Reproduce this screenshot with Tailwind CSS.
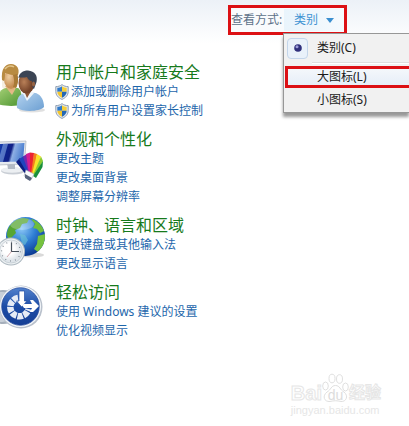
<!DOCTYPE html>
<html lang="zh-CN">
<head>
  <meta charset="UTF-8" />
  <meta name="viewport" content="width=device-width, initial-scale=1.0" />
  <title>控制面板</title>
  <script src="https://cdn.jsdelivr.net/npm/@tailwindcss/browser@4"></script>
</head>
<body class="flex min-h-screen flex-col bg-white font-['Noto_Sans','Noto_Sans_CJK_SC',sans-serif] text-xs text-[#1d66ab]">

  <!-- shield used in front of admin links -->
  <svg class="hidden" aria-hidden="true">
    <symbol id="shield" viewBox="0 0 14 16">
      <path d="M7 .6 C5.4 2 3 2.6 .8 2.6 V7.5 C.8 11.4 3.6 14 7 15.4 C10.4 14 13.2 11.4 13.2 7.5 V2.6 C11 2.6 8.6 2 7 .6Z" fill="#e4e8ee" stroke="#8395ab" stroke-width=".9" />
      <path d="M7 2.2 C5.6 3.2 4 3.7 2.3 3.8 V7.8 H7Z" fill="#2f79c9" />
      <path d="M7 2.2 C8.4 3.2 10 3.7 11.7 3.8 V7.8 H7Z" fill="#f6cf3a" />
      <path d="M2.3 7.8 H7 V13.8 C4.4 12.6 2.4 10.6 2.3 7.8Z" fill="#f3c52c" />
      <path d="M11.7 7.8 H7 V13.8 C9.6 12.6 11.6 10.6 11.7 7.8Z" fill="#2467b5" />
    </symbol>
  </svg>

  <header class="flex h-[62px] items-start justify-end bg-linear-to-b from-[#ecf1f7] to-white to-70% pt-[5px] pr-[62px]">
    <div class="relative flex h-[30px] w-[119px] items-center border-3 border-[#dc1014] bg-[#f9fbfd]">
      <label for="view-btn" class="w-[53px] whitespace-nowrap text-[#5d7188]">查看方式:</label>
      <button id="view-btn" type="button" aria-haspopup="menu" aria-expanded="true" class="flex h-[22px] flex-1 items-center gap-2 bg-linear-to-r from-[#e9f4fc] to-[#f6fafd] pl-[10px] text-[#3e93d3]">
        类别
        <svg viewBox="0 0 8 5" class="h-[5px] w-2" aria-hidden="true"><path d="M0 0 H8 L4 5Z" fill="#3a8fd0" /></svg>
      </button>

      <div role="menu" aria-labelledby="view-btn" class="absolute top-[25px] -right-[65px] left-[52px] z-10 border border-r-0 border-[#979797] bg-[#f1f1f1] text-[#1a1a1a] shadow-[0_4px_3px_rgba(0,0,0,0.4)]">
        <button type="button" role="menuitemradio" aria-checked="true" class="flex h-7 w-full items-center gap-[9px] pl-[3px]">
          <span class="grid size-[21px] place-items-center rounded-sm border border-[#c3d5ea] bg-[#e9f1fa]">
            <svg viewBox="0 0 8 8" class="size-2" aria-hidden="true">
              <circle cx="4" cy="4" r="3.8" fill="#30307c" />
              <circle cx="3" cy="2.8" r="1.5" fill="#9d9dda" />
            </svg>
          </span>
          <span>类别(C)</span>
        </button>
        <div class="ml-7 border-t border-[#dedede] bg-white pb-px"></div>
        <div class="pt-0.5 pl-px">
          <button type="button" role="menuitemradio" aria-checked="false" class="flex h-[22px] w-full items-center border-3 border-r-0 border-[#dc1014] bg-linear-to-b from-[#f4f7fb] to-[#e6eef8] pl-[29px]">大图标(L)</button>
        </div>
        <button type="button" role="menuitemradio" aria-checked="false" class="flex h-6 w-full items-center pl-[33px]">小图标(S)</button>
      </div>
    </div>
  </header>

  <main class="flex flex-col gap-[9px]">
    <section class="flex">
      <svg viewBox="0 0 48 56" class="h-14 w-12 shrink-0" aria-hidden="true">
        <defs>
          <linearGradient id="green" x1="0" y1="0" x2="1" y2="1"><stop offset="0" stop-color="#a6d177" /><stop offset="1" stop-color="#4c9430" /></linearGradient>
          <linearGradient id="blue" x1="0" y1="0" x2="1" y2="1"><stop offset="0" stop-color="#b4d3ef" /><stop offset="1" stop-color="#6c9fd2" /></linearGradient>
          <radialGradient id="face" cx=".35" cy=".4"><stop offset="0" stop-color="#f7d9b0" /><stop offset="1" stop-color="#c98f58" /></radialGradient>
          <radialGradient id="face2" cx=".35" cy=".45"><stop offset="0" stop-color="#b98058" /><stop offset="1" stop-color="#754329" /></radialGradient>
        </defs>
        <path d="M-3 42 C-3 32 0 27 6 26 L18 26 C21 28 22 32 22 42 C16 45 4 44 -3 42Z" fill="url(#green)" />
        <path d="M5 24 L12 33 L17 24Z" fill="#e5b987" />
        <ellipse cx="11" cy="17" rx="7" ry="10" fill="url(#face)" />
        <path d="M2 17 C2 7 5 2 11 2 C17 2 20 7 18 13 C13 14 9 12 6 10 C7 13 10 14 13 15 L14 28 C9 29 4 28 2 25Z" fill="#b99045" opacity=".15" />
        <path d="M2 18 C1 7 5 2 11 2 C17 2 20 7 18 13 C13 14 9 12 5 11 C5 15 5 16 4 19Z" fill="#b88b42" />
        <path d="M17 12 C19 16 18 23 16 26 L13 25 C15 21 14 17 13 13Z" fill="#a87a36" />
        <path d="M5 7 C7 4 11 3 14 5" fill="none" stroke="#e3c68c" stroke-width="1.5" />
        <ellipse cx="32" cy="48" rx="13" ry="2.500" fill="#000" opacity=".12" />
        <path d="M17 46 C16 37 19 32 25 31 L36 31 C41 33 44 38 44 45 C39 50 23 50 17 46Z" fill="url(#blue)" />
        <path d="M22 30 L27 39 L35 30Z" fill="#eef4fa" />
        <path d="M23 26 L27 36 L33 26Z" fill="#8d5636" />
        <ellipse cx="26.500" cy="21" rx="8" ry="10.500" fill="url(#face2)" />
        <path d="M18.500 16 C19 11 23 8.500 28 8.500 C35 9 38 14 36.500 20 L34 27 C32 26 32 22 32 19 C29 19 28 17 27 15 C24 16 20 15 18.500 16Z" fill="#3b4454" />
        <ellipse cx="33.500" cy="22" rx="1.500" ry="2.500" fill="#9a6443" />
      </svg>
      <div class="pl-2">
        <h2 class="text-base leading-5 text-[#177a1c]">用户帐户和家庭安全</h2>
        <ul class="leading-[19px]">
          <li><a href="#" class="flex items-center gap-0.5"><svg class="-ml-px h-4 w-[14px]" aria-hidden="true"><use href="#shield" /></svg>添加或删除用户帐户</a></li>
          <li><a href="#" class="flex items-center gap-0.5"><svg class="-ml-px h-4 w-[14px]" aria-hidden="true"><use href="#shield" /></svg>为所有用户设置家长控制</a></li>
        </ul>
      </div>
    </section>

    <section class="flex">
      <svg viewBox="0 0 48 56" class="h-14 w-12 shrink-0" aria-hidden="true">
        <defs>
          <linearGradient id="screen" x1="0" y1="0" x2="1" y2=".2"><stop offset="0" stop-color="#1c48b8" /><stop offset=".35" stop-color="#0c2390" /><stop offset=".55" stop-color="#122186" /><stop offset=".65" stop-color="#8eafe4" /><stop offset="1" stop-color="#4c7fd0" /></linearGradient>
        </defs>
        <ellipse cx="13" cy="42" rx="12" ry="3.500" fill="#c9ced5" />
        <ellipse cx="12" cy="41" rx="11" ry="2.800" fill="#eceff2" />
        <path d="M7 34 H15 V40 H8Z" fill="#b3bac4" />
        <path d="M-2 13 L26 12 L24.500 35 L-2 36Z" fill="#e5e9ee" stroke="#aab1bb" stroke-width=".7" />
        <path d="M-2 15 L24.500 14 L23 32.500 L-2 33Z" fill="url(#screen)" />
        <path d="M3 15 L8 15 L3 33 L-2 33Z" fill="#9bc1f4" opacity=".5" />
        <path d="M27 47 L16 33 L20 29 L30 45Z" fill="#0c1d80" />
        <path d="M28 46 L19 30 L24 27 L31 45Z" fill="#2044bd" />
        <path d="M29 45 L23 27.500 L27 25 L31 44Z" fill="#6f2bb0" />
        <path d="M29 45 L26 25 L30 23.500 L32 44Z" fill="#d41e92" />
        <path d="M30 45 L30 23.500 L34 24 L33 44Z" fill="#ec2433" />
        <path d="M31 45 L34 24 L37 25 L34 45Z" fill="#f4801c" />
        <path d="M32 45 L37 25 L41 27.500 L35 45Z" fill="#f8e22a" />
        <path d="M33 46 L41 27.500 L43 32 L35 47Z" fill="#8ccc2f" />
        <path d="M33 47 L43 32 L42.500 38 L36 49Z" fill="#188f3b" />
        <path d="M26 41 L34 45 L31 51 L24 47Z" fill="#f8f9fb" stroke="#a4abb6" stroke-width=".6" />
        <path d="M25 45 L32 49 L30 52 L25 49Z" fill="#56617b" />
      </svg>
      <div class="pl-2">
        <h2 class="text-base leading-5 text-[#177a1c]">外观和个性化</h2>
        <ul class="leading-[19px]">
          <li><a href="#">更改主题</a></li>
          <li><a href="#">更改桌面背景</a></li>
          <li><a href="#">调整屏幕分辨率</a></li>
        </ul>
      </div>
    </section>

    <section class="flex">
      <svg viewBox="0 0 48 56" class="h-14 w-12 shrink-0" aria-hidden="true">
        <defs>
          <radialGradient id="sea" cx=".4" cy=".3" r=".7"><stop offset="0" stop-color="#8cc8f6" /><stop offset=".5" stop-color="#2f7ed4" /><stop offset="1" stop-color="#0c3c94" /></radialGradient>
          <radialGradient id="dial" cx=".4" cy=".4"><stop offset=".5" stop-color="#fff" /><stop offset="1" stop-color="#dfe5ea" /></radialGradient>
          <clipPath id="globe"><circle cx="25.500" cy="21.500" r="19.500" /></clipPath>
        </defs>
        <ellipse cx="31" cy="40" rx="13" ry="2.500" fill="#000" opacity=".15" />
        <circle cx="25.500" cy="21.500" r="19.500" fill="url(#sea)" />
        <g clip-path="url(#globe)">
          <path d="M7 20 C7 11 14 4 23 3 L29 4 L27 8 L22 9 L20 13 L15 15 L16 18 L12 22 L9 26Z" fill="#57a634" />
          <path d="M31 4 C37 5 42 10 44 16 L40 18 L37 14 L33 13 L35 9Z" fill="#6fbd3d" />
          <path d="M38 21 L45 19 C46 26 43 33 38 37 L34 34 L37 29Z" fill="#76c23e" />
          <path d="M20 19 L25 20 L28 25 L25 30 L22 29Z" fill="#6fc4d5" opacity=".6" />
          <ellipse cx="22" cy="9" rx="12" ry="6" fill="#fff" opacity=".25" />
        </g>
        <circle cx="11" cy="36.500" r="14" fill="#aeb9c1" />
        <circle cx="11" cy="36.500" r="13" fill="#edf1f3" />
        <circle cx="11" cy="36.500" r="11.500" fill="url(#dial)" stroke="#bdc7ce" stroke-width=".7" />
        <circle cx="11" cy="36.500" r="9.500" fill="none" stroke="#6d7780" stroke-width="1.200" stroke-dasharray=".8 4.174" />
        <path d="M11.500 27.500 V36.500 H19" fill="none" stroke="#47525c" stroke-width="1.200" />
        <path d="M11.500 36.500 L7 42" stroke="#b8727a" stroke-width=".6" />
      </svg>
      <div class="pl-2">
        <h2 class="text-base leading-5 text-[#177a1c]">时钟、语言和区域</h2>
        <ul class="leading-[19px]">
          <li><a href="#">更改键盘或其他输入法</a></li>
          <li><a href="#">更改显示语言</a></li>
        </ul>
      </div>
    </section>

    <section class="flex">
      <svg viewBox="0 0 48 56" class="h-14 w-12 shrink-0" aria-hidden="true">
        <defs>
          <linearGradient id="disc" x1="0" y1="0" x2="0" y2="1"><stop offset="0" stop-color="#5282cd" /><stop offset=".5" stop-color="#1c4ca6" /><stop offset="1" stop-color="#163f95" /></linearGradient>
        </defs>
        <circle cx="3" cy="25" r="17" fill="#a5afbb" />
        <circle cx="2" cy="25" r="15" fill="#c9d0d9" />
        <circle cx="21" cy="25" r="21.500" fill="#b9c1cc" />
        <circle cx="20.500" cy="24.500" r="20.500" fill="#f4f7fa" />
        <circle cx="20.500" cy="24.500" r="18.800" fill="url(#disc)" stroke="#24489a" stroke-width=".7" />
        <path d="M18 16 A9.200 9.200 0 1 0 28.500 27" fill="none" stroke="#e6ecf6" stroke-width="6.500" stroke-dasharray="5.300 1" />
        <path d="M19 9 H24.500 V19 H27 L21.700 25 L16.500 19 H19Z" fill="#fff" stroke="#204fa6" stroke-width=".7" />
        <path d="M22 23 L24 22 H32 L30 18 H33 L39 24 L33 30 H30 L32 26 H24Z" fill="#fff" />
      </svg>
      <div class="pl-2">
        <h2 class="text-base leading-5 text-[#177a1c]">轻松访问</h2>
        <ul class="leading-[19px]">
          <li><a href="#">使用 Windows 建议的设置</a></li>
          <li><a href="#">优化视频显示</a></li>
        </ul>
      </div>
    </section>
  </main>

  <!-- watermark -->
  <footer class="mt-auto mr-7 mb-[9px] self-end font-['Liberation_Sans','Noto_Sans_CJK_SC',sans-serif] font-bold text-white [-webkit-text-stroke:1px_#e6e6e6]">
    <div class="flex items-end">
      <span class="text-xl leading-5">Bai</span>
      <span class="relative h-[30px] w-[27px]">
        <svg viewBox="0 0 27 30" class="h-[30px] w-[27px]" fill="#fff" stroke="#e0e0e0" aria-hidden="true">
          <ellipse cx="3.500" cy="13" rx="2.800" ry="4" />
          <ellipse cx="10" cy="5.500" rx="3" ry="4.300" />
          <ellipse cx="17.500" cy="6" rx="3" ry="4.300" />
          <ellipse cx="23.500" cy="14" rx="2.800" ry="4" />
          <path d="M13.500 12.500 C18 12.500 18 17 22 19 C27 23 24 29 19 28.500 C15 27.500 12 27.500 8 28.500 C2 29 0 23 5 19 C9 17 9 12.500 13.500 12.500Z" />
        </svg>
        <span class="absolute inset-x-0 bottom-0 text-center text-sm leading-4 font-normal text-[#dcdcdc] [-webkit-text-stroke:0px]">du</span>
      </span>
      <span class="text-base leading-5">经验</span>
    </div>
    <div class="text-[11px] leading-[14px] font-normal text-[#e6e6e6] [-webkit-text-stroke:0px]">jingyan.baidu.com</div>
  </footer>
</body>
</html>
